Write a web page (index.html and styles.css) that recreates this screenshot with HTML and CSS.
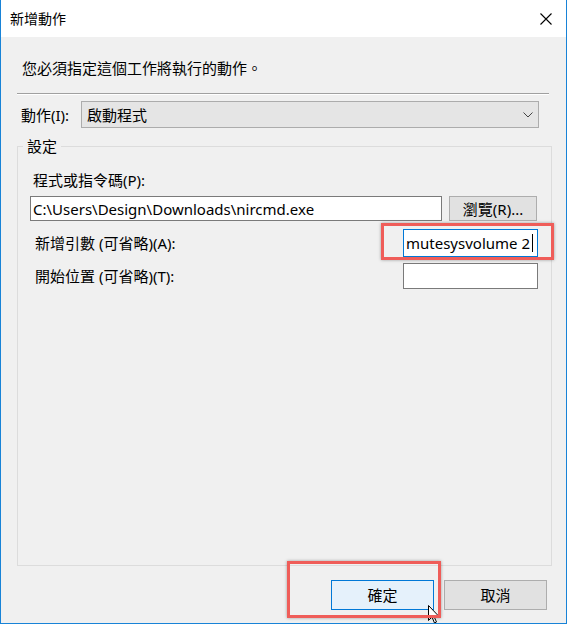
FILE: index.html
```html
<!DOCTYPE html>
<html lang="zh-Hant">
<head>
    <meta charset="UTF-8">
    <meta name="viewport" content="width=device-width, initial-scale=1.0">
    <title>新增動作</title>
    <link rel="stylesheet" href="styles.css">
</head>
<body>
    <div class="window">
        <div class="titlebar">
            <span class="title">新增動作</span>
            <svg class="close" width="12" height="12" viewBox="0 0 12 12">
                <path d="M0.5 0.5 L11.5 11.5 M11.5 0.5 L0.5 11.5" stroke="#000" stroke-width="1.1" fill="none"/>
            </svg>
        </div>

        <div class="content">
            <p class="intro">您必須指定這個工作將執行的動作。</p>
            <div class="separator"></div>

            <div class="action-row">
                <label class="action-label">動作(I):</label>
                <div class="select">
                    <span>啟動程式</span>
                    <svg width="10" height="6" viewBox="0 0 10 6">
                        <path d="M0.5 0.5 L5 5 L9.5 0.5" stroke="#444" stroke-width="1" fill="none"/>
                    </svg>
                </div>
            </div>

            <fieldset class="group">
                <legend>設定</legend>
                <div class="field-label">程式或指令碼(P):</div>
                <div class="path-row">
                    <div class="textbox path">C:\Users\Design\Downloads\nircmd.exe</div>
                    <div class="button browse">瀏覽(R)...</div>
                </div>
                <div class="opt-row args-row">
                    <span class="opt-label">新增引數 (可省略)(A):</span>
                    <div class="marked">
                        <div class="textbox small focused">mutesysvolume 2<span class="caret"></span></div>
                    </div>
                </div>
                <div class="opt-row start-row">
                    <span class="opt-label">開始位置 (可省略)(T):</span>
                    <div class="textbox small start"></div>
                </div>
            </fieldset>

            <div class="footer">
                <div class="marked ok-wrap">
                    <div class="button ok">確定</div>
                    <svg class="pointer" width="12" height="20" viewBox="0 0 12 20">
                        <path d="M0.5 0.5 L0.5 15.5 L4 12 L6.5 18 L8.5 17 L6 11.5 L11 11.5 Z" fill="#fff" stroke="#000" stroke-width="1"/>
                    </svg>
                </div>
                <div class="button cancel">取消</div>
            </div>
        </div>
    </div>
</body>
</html>
```

FILE: styles.css
```css
* {
    margin: 0;
    padding: 0;
    box-sizing: border-box;
}
body {
    font-family: "Noto Sans", "Noto Sans CJK TC", sans-serif;
    font-size: 15px;
    line-height: 20px;
    color: #000;
    background: #f0f0f0;
}
.window {
    width: 567px;
    height: 624px;
    border: 1px solid #1883d7;
    border-top: none;
    background: #f0f0f0;
    overflow: hidden;
}
.titlebar {
    height: 37px;
    background: #fff;
    display: flex;
    align-items: center;
    justify-content: space-between;
    padding: 0 14px 0 9px;
}
.title {
    font-size: 14px;
}
.close {
    margin-top: 1px;
}
.content {
    padding: 0 15px 0 16px;
}
.intro {
    margin-top: 21px;
    padding-left: 5px;
}
.separator {
    width: 532px;
    margin-top: 15px;
    border-top: 1px solid #a0a0a0;
    border-bottom: 1px solid #fff;
}
.action-row {
    display: flex;
    align-items: center;
    margin-top: 6px;
}
.action-label {
    width: 64px;
    padding-left: 4px;
}
.select {
    width: 458px;
    height: 27px;
    background: #e5e5e5;
    border: 1px solid #acacac;
    display: flex;
    align-items: center;
    justify-content: space-between;
    padding: 0 5px 0 5px;
}
.group {
    width: 535px;
    height: 430px;
    margin-top: 8px;
    border: 1px solid #dcdcdc;
    padding: 0 13px 0 12px;
}
.group legend {
    margin-left: -7px;
    padding: 0 4px;
}
.field-label {
    margin-top: 14px;
    padding-left: 3px;
}
.path-row {
    display: flex;
    gap: 7px;
    margin-top: 6px;
}
.textbox {
    background: #fff;
    border: 1px solid #7a7a7a;
    display: flex;
    align-items: center;
    padding: 0 2px;
    white-space: nowrap;
}
.path {
    width: 412px;
    height: 25px;
}
.button {
    background: #e1e1e1;
    border: 1px solid #adadad;
    display: flex;
    align-items: center;
    justify-content: center;
}
.browse {
    width: 88px;
    height: 25px;
}
.opt-row {
    display: flex;
    align-items: center;
    justify-content: space-between;
    padding-left: 5px;
}
.args-row {
    margin-top: 8px;
}
.start-row {
    margin-top: 6px;
}
.small {
    width: 135px;
    height: 28px;
}
.start {
    height: 26px;
}
.focused {
    border-color: #0078d7;
}
.caret {
    display: inline-block;
    width: 1px;
    height: 18px;
    background: #000;
    margin-left: 2px;
}
.marked {
    position: relative;
}
.marked::after {
    content: "";
    position: absolute;
    border: 3px solid #ef5d59;
    box-shadow: 0 0 3px rgba(0, 0, 0, 0.35);
    pointer-events: none;
}
.args-row .marked::after {
    left: -22px;
    right: -16px;
    top: -6px;
    bottom: -3px;
}
.footer {
    display: flex;
    justify-content: flex-end;
    gap: 10px;
    margin-top: 14px;
    padding-right: 4px;
}
.ok, .cancel {
    width: 103px;
    height: 30px;
}
.ok {
    background: #e5f1fb;
    border-color: #0078d7;
}
.ok-wrap::after {
    left: -44px;
    right: -7px;
    top: -19px;
    bottom: -8px;
}
.pointer {
    position: absolute;
    left: 97px;
    top: 25px;
}
```
